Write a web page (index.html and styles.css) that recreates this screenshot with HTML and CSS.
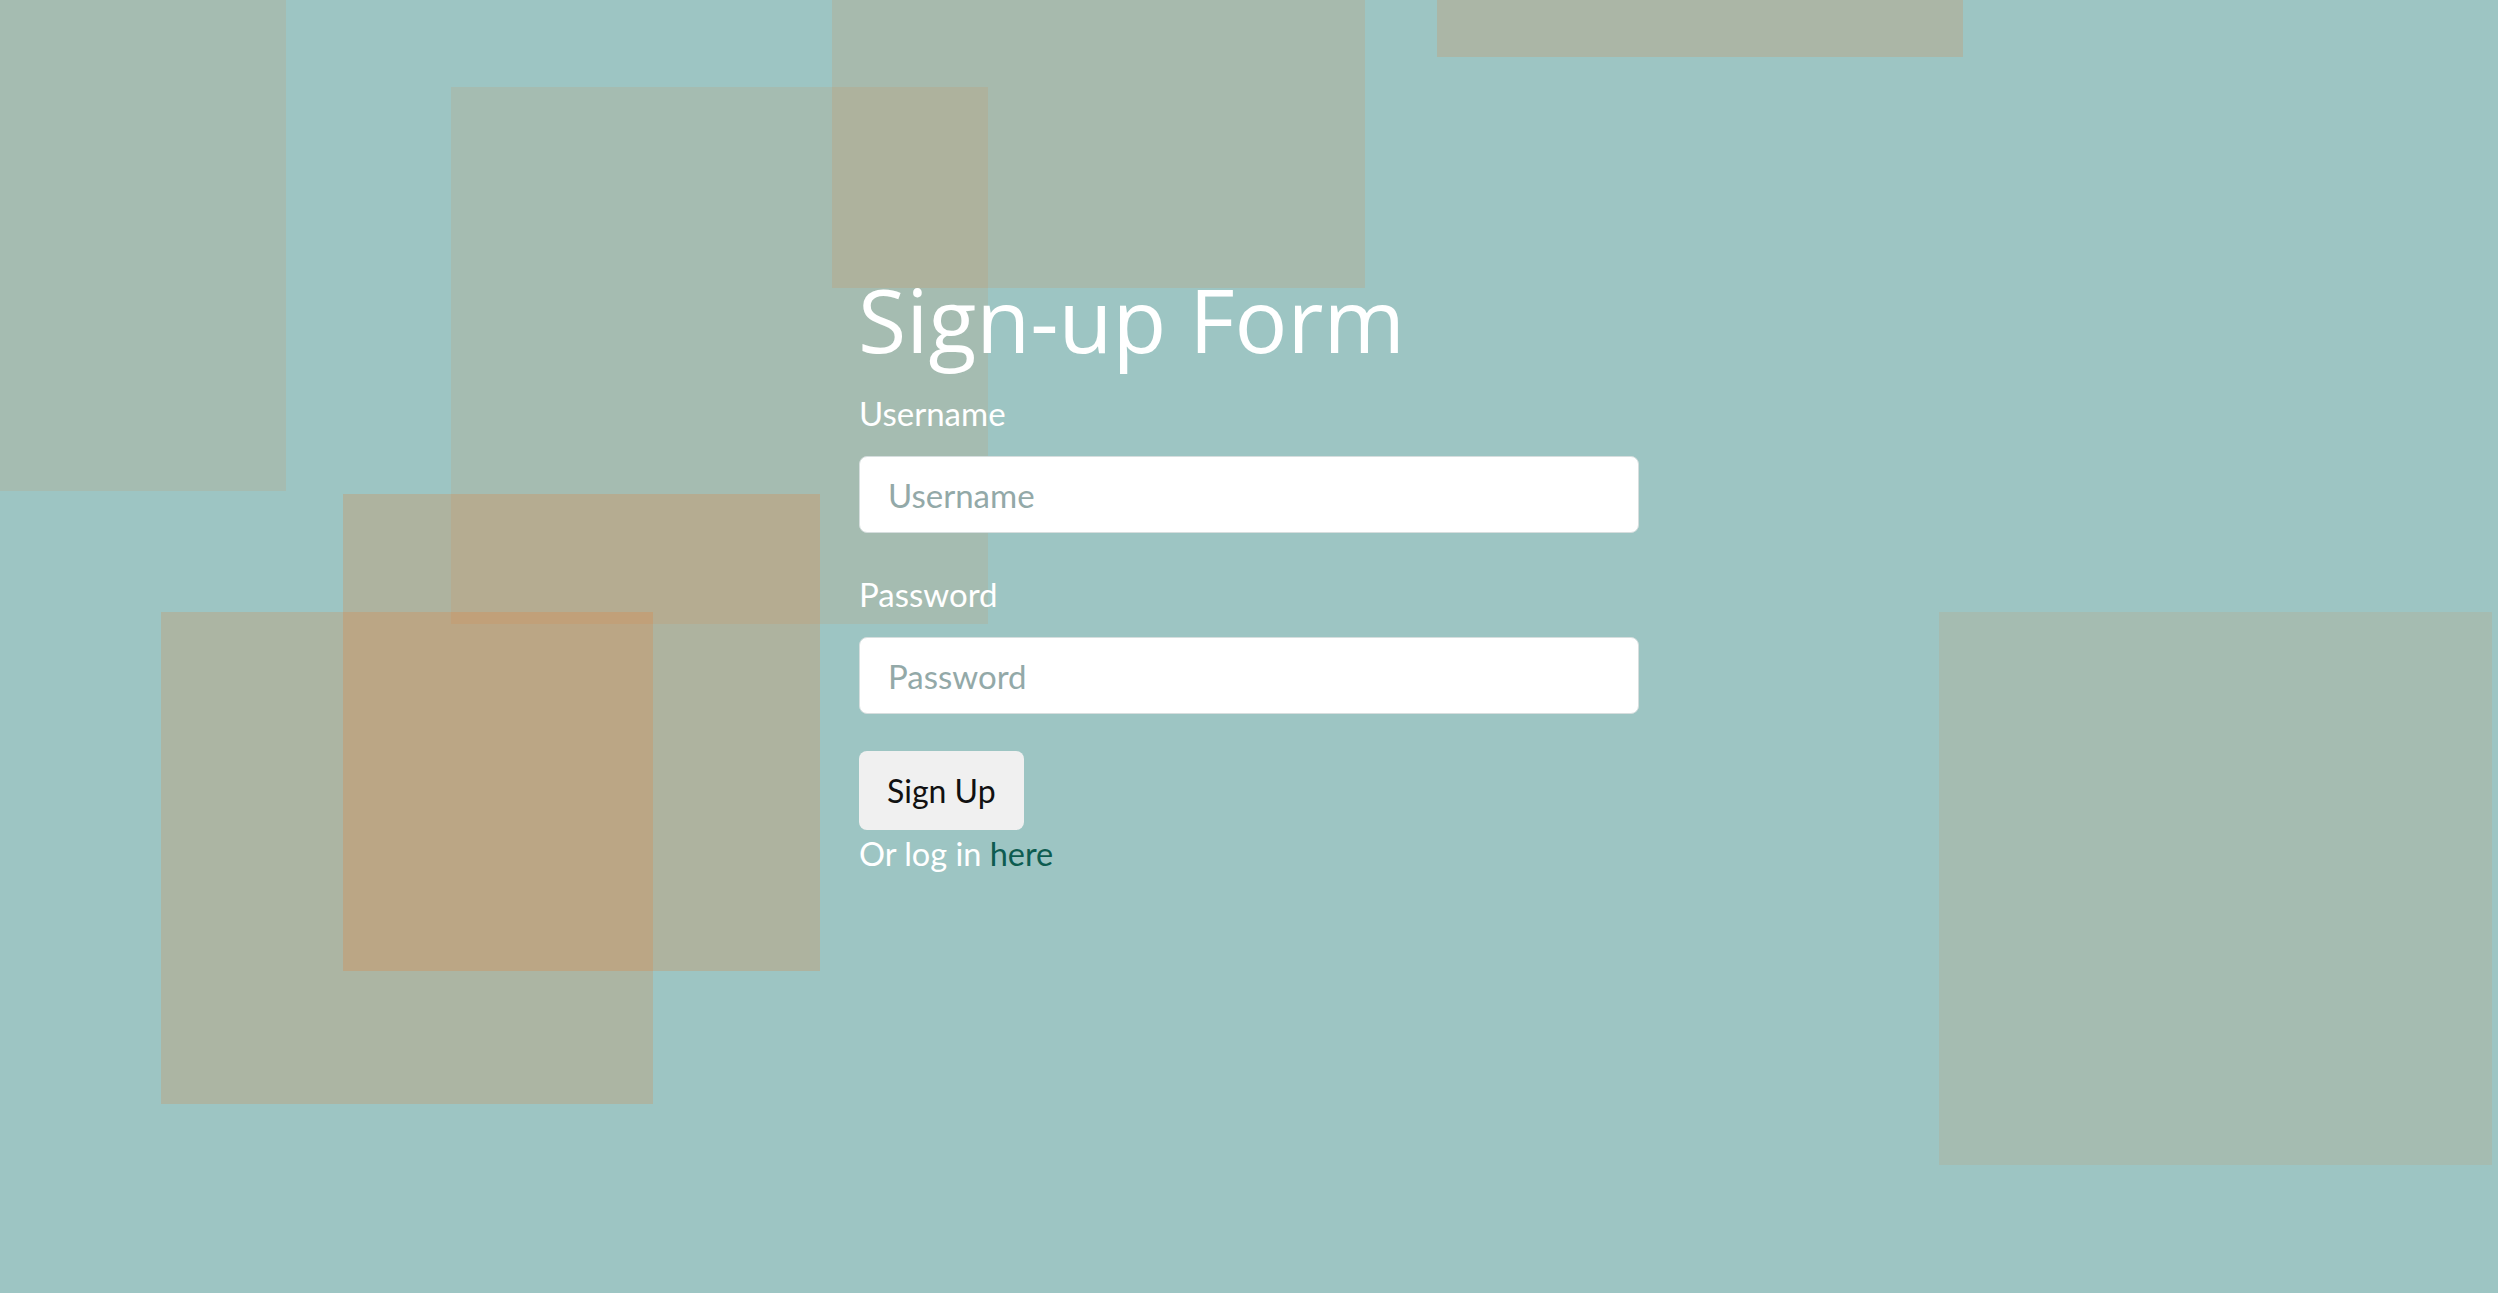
FILE: index.html
```html
<!DOCTYPE html>
<html lang="en">
<head>
<meta charset="utf-8">
<title>Sign-up Form</title>
<link rel="stylesheet" href="styles.css">
</head>
<body>
<div class="decor" aria-hidden="true">
  <div class="sq sq-a"></div>
  <div class="sq sq-b"></div>
  <div class="sq sq-c"></div>
  <div class="sq sq-d"></div>
  <div class="sq sq-e"></div>
  <div class="sq sq-f"></div>
  <div class="sq sq-g"></div>
</div>
<main class="page">
  <form class="signup">
    <h1 class="title">Sign-up Form</h1>
    <label class="field-label" for="username">Username</label>
    <input class="field-input" id="username" type="text" placeholder="Username">
    <label class="field-label field-label-second" for="password">Password</label>
    <input class="field-input" id="password" type="password" placeholder="Password">
    <button class="btn" type="button">Sign Up</button>
    <p class="login-note">Or log in <a class="login-link" href="#">here</a></p>
  </form>
</main>
</body>
</html>
```

FILE: styles.css
```css
html, body {
  margin: 0;
  padding: 0;
  height: 100%;
}

body {
  background: #9dc5c3;
  font-family: Lato, "Open Sans", "Liberation Sans", sans-serif;
  color: #ffffff;
  overflow: hidden;
  position: relative;
}

.decor {
  position: absolute;
  inset: 0;
  z-index: 0;
}

.sq {
  position: absolute;
  background: rgb(255, 100, 0);
}

.sq-a { left: 0;    top: 0;   width: 286px; height: 491px; opacity: 0.09; }
.sq-b { left: 451px; top: 87px; width: 537px; height: 537px; opacity: 0.09; }
.sq-c { left: 832px; top: 0;   width: 533px; height: 288px; opacity: 0.11; }
.sq-d { left: 343px; top: 494px; width: 477px; height: 477px; opacity: 0.18; }
.sq-e { left: 161px; top: 612px; width: 492px; height: 492px; opacity: 0.16; }
.sq-f { left: 1437px; top: 0;  width: 526px; height: 57px;  opacity: 0.15; }
.sq-g { left: 1939px; top: 612px; width: 553px; height: 553px; opacity: 0.09; }

.page {
  position: relative;
  z-index: 1;
  padding-top: 269px;
}

.signup {
  width: 780px;
  margin: 0 auto;
  display: flex;
  flex-direction: column;
  align-items: flex-start;
}

.title {
  margin: 0;
  font-family: "Open Sans", "Liberation Sans", sans-serif;
  font-weight: 400;
  font-size: 88px;
  line-height: 100px;
  color: #ffffff;
  margin-left: -1px;
}

.field-label {
  display: block;
  margin-top: 26px;
  font-size: 33px;
  line-height: 36px;
  color: #ffffff;
}

.field-label-second {
  margin-top: 43px;
}

.field-input {
  box-sizing: border-box;
  width: 100%;
  height: 77px;
  margin-top: 25px;
  padding: 0 28px;
  border: 1px solid #d6dede;
  border-radius: 8px;
  background: #ffffff;
  font-family: Lato, "Liberation Sans", sans-serif;
  font-size: 33px;
  color: #333333;
  outline: none;
}

.field-input::placeholder {
  color: #93a9a8;
  opacity: 1;
}

.btn {
  margin-top: 37px;
  height: 79px;
  padding: 0 28px;
  border: none;
  border-radius: 8px;
  background: #f0f0f0;
  font-family: Lato, "Liberation Sans", sans-serif;
  font-size: 32px;
  color: #111111;
  cursor: pointer;
}

.login-note {
  margin: 4px 0 0;
  font-size: 32.5px;
  line-height: 40px;
  color: #ffffff;
}

.login-link {
  color: #0d5c50;
  text-decoration: none;
}
```
